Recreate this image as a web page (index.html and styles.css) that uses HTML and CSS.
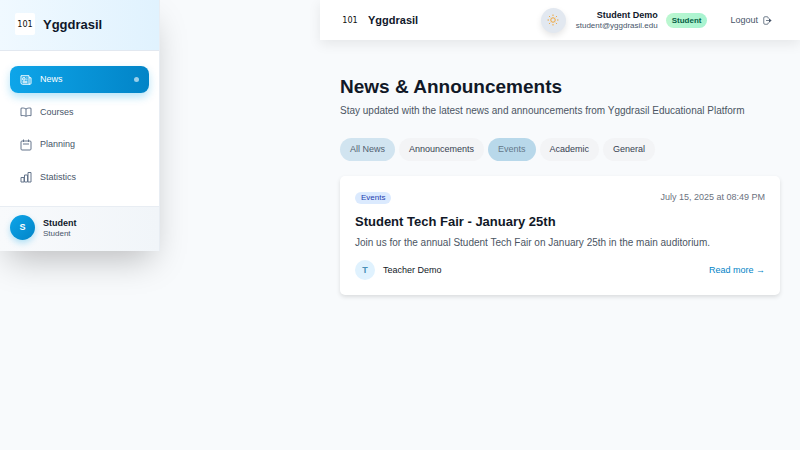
FILE: index.html
```html
<!DOCTYPE html>
<html lang="en">
<head>
<meta charset="utf-8">
<meta name="viewport" content="width=device-width, initial-scale=1">
<title>Yggdrasil</title>
<link rel="stylesheet" href="styles.css">
</head>
<body>
<div class="app">
  <aside class="sidebar">
    <div class="sidebar-head">
      <span class="logo logo-tile">101</span>
      <span class="brand brand-large">Yggdrasil</span>
    </div>
    <nav class="nav" aria-label="Main">
      <a class="nav-item active" href="#news">
        <svg class="icon" viewBox="0 0 24 24"><path d="M18 7.500h4v11a2 2 0 0 1-4 0V3.500H2v14a3 3 0 0 0 3 3h15M5.500 7.500h4.500v4.500H5.500zM12.500 8h2.500M12.500 11.500h2.500M5 14.500h10M5 17.500h10"/></svg>
        <span>News</span><i class="dot"></i>
      </a>
      <a class="nav-item" href="#courses">
        <svg class="icon" viewBox="0 0 24 24"><path d="M12 6C9 4 5 3.500 2 4.500v15c3-1 7-.5 10 1 3-1.500 7-2 10-1v-15C19 3.500 15 4 12 6zM12 6v14.500"/></svg>
        <span>Courses</span>
      </a>
      <a class="nav-item" href="#planning">
        <svg class="icon" viewBox="0 0 24 24"><path d="M7 1v5M17 1v5M4 4h16a2 2 0 0 1 2 2v14a2 2 0 0 1-2 2H4a2 2 0 0 1-2-2V6a2 2 0 0 1 2-2zM6 10h12"/></svg>
        <span>Planning</span>
      </a>
      <a class="nav-item" href="#statistics">
        <svg class="icon" viewBox="0 0 24 24"><path d="M2 13h6v9H2zM9 8h6v14H9zM16 3h6v19h-6z"/></svg>
        <span>Statistics</span>
      </a>
    </nav>
    <div class="sidebar-foot">
      <span class="avatar avatar-user">S</span>
      <div>
        <div class="user-name">Student</div>
        <div class="user-note">Student</div>
      </div>
    </div>
  </aside>

  <div class="page">
    <header class="topbar">
      <span class="logo">101</span>
      <span class="brand">Yggdrasil</span>
      <button class="theme" type="button" aria-label="Toggle theme">
        <svg class="sun" viewBox="0 0 24 24"><circle cx="12" cy="12" r="4.500"/><path d="M12 1v3M12 20v3M1 12h3M20 12h3M4.200 4.200l2.100 2.100M17.700 17.700l2.100 2.100M4.200 19.800l2.100-2.100M17.700 6.300l2.100-2.100"/></svg>
      </button>
      <div class="account">
        <div class="user-name">Student Demo</div>
        <div class="user-note">student@yggdrasil.edu</div>
      </div>
      <span class="role">Student</span>
      <button class="logout" type="button">Logout
        <svg class="icon-exit" viewBox="0 0 24 24"><path d="M14 7V5a3 3 0 0 0-3-3H5a3 3 0 0 0-3 3v14a3 3 0 0 0 3 3h6a3 3 0 0 0 3-3v-2M8 12h12"/><path class="solid" d="M16 6l7 6-7 6z"/></svg>
      </button>
    </header>

    <main class="content">
      <h1>News &amp; Announcements</h1>
      <p class="lead">Stay updated with the latest news and announcements from Yggdrasil Educational Platform</p>
      <div class="filters">
        <button class="chip chip-all" type="button">All News</button>
        <button class="chip" type="button">Announcements</button>
        <button class="chip chip-selected" type="button">Events</button>
        <button class="chip" type="button">Academic</button>
        <button class="chip" type="button">General</button>
      </div>
      <article class="card">
        <div class="row">
          <span class="tag">Events</span>
          <time class="date" datetime="2025-07-15T20:49">July 15, 2025 at 08:49 PM</time>
        </div>
        <h2>Student Tech Fair - January 25th</h2>
        <p class="summary">Join us for the annual Student Tech Fair on January 25th in the main auditorium.</p>
        <div class="row">
          <div class="author"><span class="avatar avatar-author">T</span><span>Teacher Demo</span></div>
          <a class="more" href="#read">Read more →</a>
        </div>
      </article>
    </main>
  </div>
</div>
</body>
</html>
```
FILE: styles.css
```css
* {
  box-sizing: border-box;
}

body {
  margin: 0;
  min-height: 100vh;
  background: #f8fafc;
  color: #111827;
  font: 9px/13px "Liberation Sans", Arial, sans-serif;
}

button {
  border: 0;
  font: inherit;
  cursor: pointer;
}

a {
  text-decoration: none;
}

h1,
h2,
p {
  margin: 0;
}

.app {
  display: flex;
  align-items: flex-start;
  gap: 160px;
}

/* Sidebar */
.sidebar {
  flex: none;
  width: 160px;
  background: #fff;
  border-right: 1px solid #e8edf3;
  box-shadow: 0 16px 32px -8px rgba(0, 0, 0, 0.25);
}

.sidebar-head {
  display: flex;
  align-items: center;
  gap: 8px;
  padding: 15px;
  padding-top: 13px;
  border-bottom: 1px solid #e2e8f0;
  background: linear-gradient(90deg, #f0f9ff, #e0f2fe);
}

.logo {
  display: grid;
  place-items: center;
  width: 20px;
  height: 20px;
  color: #111;
  font: 9px/20px "DejaVu Sans Condensed", "DejaVu Sans", sans-serif;
}

.logo-tile {
  height: 22px;
  border-radius: 2px;
  background: #fff;
}

.brand {
  color: #0f172a;
  font-size: 11px;
  font-weight: bold;
}

.brand-large {
  font-size: 13px;
}

.nav {
  display: flex;
  flex-direction: column;
  justify-content: space-between;
  min-height: 155px;
  padding: 15px 10px;
}

.nav-item {
  display: flex;
  align-items: center;
  gap: 8px;
  height: 27px;
  padding: 0 10px;
  border-radius: 8px;
  color: #475569;
}

.nav-item .icon {
  color: #64748b;
}

.nav-item.active,
.nav-item.active .icon {
  color: #fff;
}

.nav-item.active {
  background: linear-gradient(90deg, #0ea5e9, #0284c7);
  box-shadow: 0 4px 9px rgba(14, 165, 233, 0.3);
}

.icon,
.icon-exit,
.sun {
  width: 12px;
  height: 12px;
  fill: none;
  stroke: currentColor;
  stroke-width: 2;
  stroke-linejoin: round;
}

.dot {
  width: 5px;
  height: 5px;
  margin-left: auto;
  border-radius: 50%;
  background: rgba(255, 255, 255, 0.6);
}

.sidebar-foot {
  display: flex;
  align-items: center;
  gap: 8px;
  padding: 8px 10px 11px;
  border-top: 1px solid #e8edf3;
  background: linear-gradient(90deg, #f8fafc, #f1f5f9);
}

.avatar {
  display: grid;
  place-items: center;
  border-radius: 50%;
  font-weight: bold;
}

.avatar-user {
  width: 25px;
  height: 25px;
  background: linear-gradient(135deg, #0ea5e9, #0284c7);
  box-shadow: 0 3px 6px rgba(14, 165, 233, 0.3);
  color: #fff;
}

.user-name {
  color: #0f172a;
  font-weight: bold;
  line-height: 12px;
}

.user-note {
  color: #475569;
  font-size: 8px;
  line-height: 10px;
}

/* Top bar */
.page {
  flex: 1;
  min-width: 0;
}

.topbar {
  display: flex;
  align-items: center;
  height: 40px;
  padding: 0 20px;
  background: #fff;
  box-shadow: 0 4px 12px rgba(0, 0, 0, 0.08);
}

.topbar .brand {
  margin-left: 8px;
}

.theme {
  display: grid;
  place-items: center;
  width: 25px;
  height: 25px;
  margin-left: auto;
  padding: 0;
  border-radius: 50%;
  background: #e2e8f0;
  box-shadow: 0 3px 6px rgba(0, 0, 0, 0.1);
  color: #f0a63a;
}

.account {
  margin: 0 8px 0 10px;
  text-align: right;
}

.role {
  padding: 1px 6px;
  border-radius: 8px;
  background: linear-gradient(90deg, #bbf7d0, #a7f3d0);
  color: #065f46;
  font-size: 8px;
  font-weight: bold;
}

.logout {
  display: flex;
  align-items: center;
  gap: 5px;
  margin-left: 15px;
  padding: 5px 8px;
  background: none;
  color: #475569;
}

.icon-exit {
  width: 9px;
  height: 9px;
}

.solid {
  fill: currentColor;
  stroke: none;
}

/* News */
.content {
  padding: 35px 20px;
}

h1 {
  font-size: 19px;
  line-height: 24px;
}

.lead {
  margin-top: 4px;
  color: #4b5563;
  font-size: 10px;
  line-height: 15px;
}

.filters {
  display: flex;
  flex-wrap: wrap;
  gap: 4px;
  margin: 20px 0 15px;
}

.chip {
  padding: 5px 10px;
  border-radius: 12px;
  background: #f3f4f6;
  color: #374151;
}

.chip-all {
  background: #d1e4f0;
  color: #526170;
}

.chip-selected {
  background: #b8d8ea;
  color: #64798a;
}

.card {
  padding: 15px;
  border-radius: 5px;
  background: #fff;
  box-shadow: 0 2px 4px rgba(0, 0, 0, 0.12);
}

.row,
.author {
  display: flex;
  align-items: center;
}

.row {
  justify-content: space-between;
}

.tag {
  padding: 0 6px;
  border-radius: 6px;
  background: #dbeafe;
  color: #1e40af;
  font-size: 8px;
  line-height: 12px;
}

.date {
  color: #6b7280;
}

h2 {
  margin: 9px 0 5px;
  font-size: 13px;
  line-height: 17px;
}

.summary {
  margin-bottom: 10px;
  color: #4b5563;
  font-size: 10px;
  line-height: 15px;
}

.author {
  gap: 8px;
}

.avatar-author {
  width: 20px;
  height: 20px;
  background: #e0f2fe;
  color: #4a90b8;
}

.more {
  color: #0284c7;
}
```
